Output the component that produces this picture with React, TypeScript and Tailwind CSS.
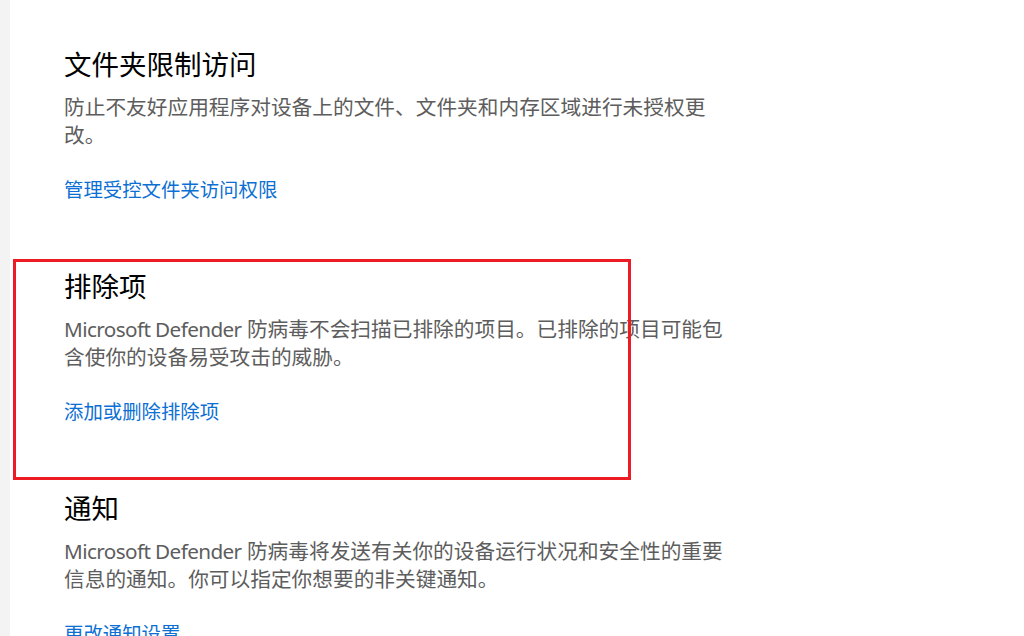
const sections = [
  {
    title: "文件夹限制访问",
    brand: "",
    lines: ["防止不友好应用程序对设备上的文件、文件夹和内存区域进行未授权更", "改。"],
    link: "管理受控文件夹访问权限",
  },
  {
    title: "排除项",
    brand: "Microsoft Defender",
    lines: [" 防病毒不会扫描已排除的项目。已排除的项目可能包", "含使你的设备易受攻击的威胁。"],
    link: "添加或删除排除项",
  },
  {
    title: "通知",
    brand: "Microsoft Defender",
    lines: [" 防病毒将发送有关你的设备运行状况和安全性的重要", "信息的通知。你可以指定你想要的非关键通知。"],
    link: "更改通知设置",
  },
]

export default function App() {
  return (
    <div
      className="relative flex h-[636px] w-full overflow-hidden bg-white"
      style={{ fontFamily: "'Noto Sans', 'Noto Sans CJK SC', sans-serif" }}
    >
      {/* nav strip */}
      <div className="w-[10px] shrink-0 bg-[#f3f3f3]" />

      <main className="flex flex-1 flex-col gap-[65px] pl-[54px] pt-[47px]">
        {sections.map((s) => (
          <section key={s.title} className="flex flex-col">
            <h2 className="text-[27.5px] font-normal leading-[36px] text-black">{s.title}</h2>
            <p className="mt-[10px] whitespace-nowrap text-[20.7px] leading-[28px] text-[#5d5d5d]">
              {s.brand && <span className="tracking-[-0.6px]">{s.brand}</span>}
              {s.lines[0]}
              <br />
              {s.lines[1]}
            </p>
            <a href="#" className="mt-[27px] self-start text-[19.4px] leading-[28px] text-[#0b6fd3]">
              {s.link}
            </a>
          </section>
        ))}
      </main>

      {/* annotation box */}
      <div className="pointer-events-none absolute left-[13px] top-[259px] h-[221px] w-[618px] border-[3px] border-[#ed1c24]" />
    </div>
  )
}
